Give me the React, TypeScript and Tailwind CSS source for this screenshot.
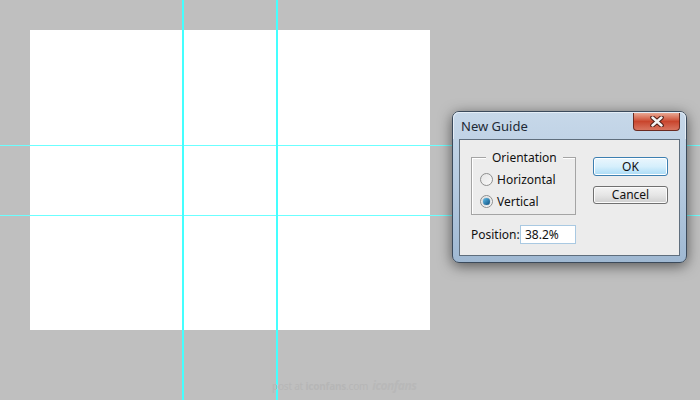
const Radio = ({ checked, label }: { checked?: boolean; label: string }) => {
  return (
    <div className="flex h-[20px] items-center pl-[8px]">
      <span className="flex h-[13px] w-[13px] items-center justify-center rounded-full border border-[#8e8f8f] bg-gradient-to-br from-[#e6e6e6] to-[#f8f8f8]">
        {checked && (
          <span className="h-[7px] w-[7px] rounded-full bg-gradient-to-br from-[#5fc0ec] to-[#0a4f80] shadow-[0_0_1px_#0b3d5f]" />
        )}
      </span>
      <span className="ml-[4px] pt-[1px] text-[12px] text-[#111]">{label}</span>
    </div>
  );
};

const NewGuideDialog = () => {
  return (
    <div className="absolute left-[452px] top-[111px] flex h-[152px] w-[235px] flex-col rounded-[7px] border border-[#3b4a5b] bg-gradient-to-b from-[#c7d8e9] via-[#b5cae0] to-[#9fb8d2] shadow-[0_3px_14px_rgba(0,0,0,0.55)]">
      <div className="flex h-[27px] shrink-0 justify-between rounded-t-[6px] border-t border-l border-r border-[#e4edf6]">
        <span className="self-center pl-[7px] pt-[1px] text-[13px] text-[#1e2a36]">New Guide</span>
        <button className="mr-[5px] flex h-[18px] w-[47px] items-center justify-center rounded-b-[4px] border border-t-0 border-[#6b2a20] bg-gradient-to-b from-[#e9a792] via-[#c9452d] to-[#d8745f]">
          <svg width="14" height="11" viewBox="0 0 14 11">
            <path d="M2.5 1.5 L11.5 9.5 M11.5 1.5 L2.5 9.5" stroke="#4a1a12" strokeWidth="4.5" strokeLinecap="round" />
            <path d="M2.5 1.5 L11.5 9.5 M11.5 1.5 L2.5 9.5" stroke="#f4f4f4" strokeWidth="2.5" strokeLinecap="round" />
          </svg>
        </button>
      </div>
      <div className="mx-[6px] mb-[6px] flex flex-1 border border-[#5f6e7d] bg-[#ececec] pl-[11px] pt-[17px]">
        <div className="flex flex-col">
          <div className="relative h-[58px] w-[105px] border border-[#a4a4a4] pt-[11px] shadow-[inset_1px_1px_0_#fff]">
            <span className="absolute -top-[8px] left-[14px] bg-[#ececec] px-[6px] text-[12px] leading-[16px] text-[#111]">
              Orientation
            </span>
            <div className="flex flex-col gap-[2px]">
              <Radio label="Horizontal" />
              <Radio label="Vertical" checked />
            </div>
          </div>
          <div className="mt-[10px] flex items-center">
            <span className="w-[49px] pt-[1px] text-[12px] text-[#111]">Position:</span>
            <div className="flex h-[19px] w-[56px] items-center border border-[#a9c9e2] bg-white pl-[4px] pt-[1px] text-[12px] text-[#111]">
              38.2%
            </div>
          </div>
        </div>
        <div className="ml-[17px] flex flex-col">
          <button className="h-[19px] w-[75px] rounded-[3px] border border-[#3c7fb1] bg-gradient-to-b from-[#eaf6fd] via-[#d6effc] to-[#a9dbf6] text-[12px] leading-[17px] text-[#111] shadow-[inset_0_0_0_1px_#fff]">
            OK
          </button>
          <button className="mt-[10px] h-[18px] w-[75px] rounded-[3px] border border-[#707070] bg-gradient-to-b from-[#f3f3f3] via-[#e6e6e6] to-[#cfcfcf] text-[12px] leading-[16px] text-[#111] shadow-[inset_0_0_0_1px_#fbfbfb]">
            Cancel
          </button>
        </div>
      </div>
    </div>
  );
};

export default function App() {
  return (
    <div className="relative h-[400px] w-[700px] overflow-hidden bg-[#bfbfbf] font-['Noto_Sans','Liberation_Sans',sans-serif]">
      <div className="pl-[30px] pt-[30px]">
        <div className="h-[300px] w-[400px] bg-white" />
      </div>

      {/* guides */}
      <div className="absolute left-0 top-[145px] h-px w-full bg-[#6bffff]" />
      <div className="absolute left-0 top-[215px] h-px w-full bg-[#6bffff]" />
      <div className="absolute left-[182px] top-0 h-full w-[2px] bg-[#44ffff]" />
      <div className="absolute left-[276px] top-0 h-full w-[2px] bg-[#44ffff]" />

      <div className="absolute left-[272px] top-[377px] flex items-center gap-[4px] text-[10px] tracking-[-0.2px] text-[#b6b6b6]">
        <span>
          post at <b>iconfans</b>.com
        </span>
        <span className="text-[12px] font-bold italic tracking-[-0.5px] text-[#b8b8b8]">iconfans</span>
      </div>

      <NewGuideDialog />
    </div>
  );
}
